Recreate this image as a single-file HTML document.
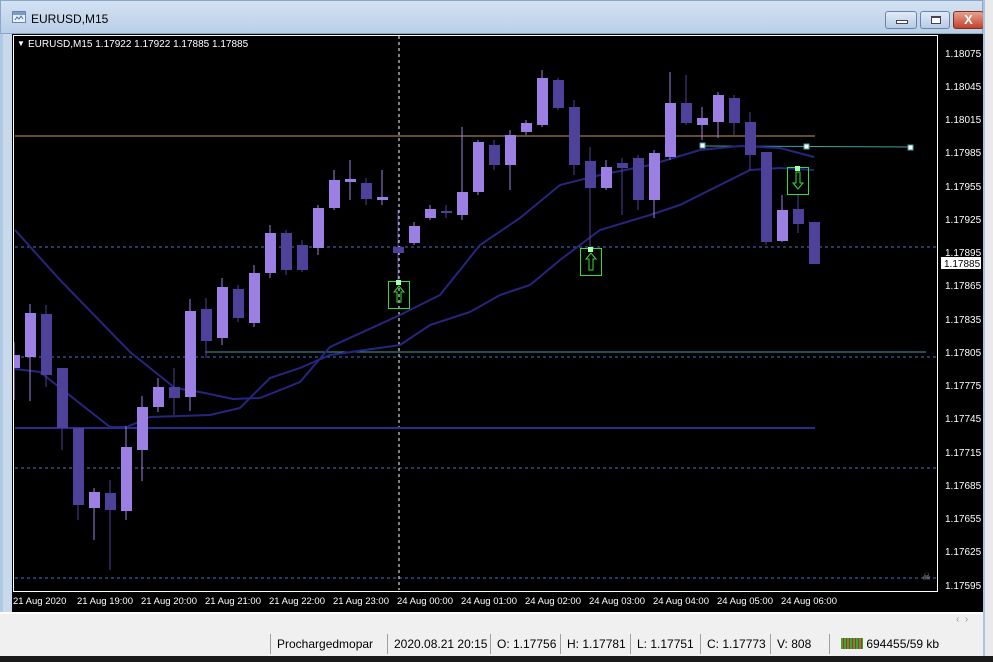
<!DOCTYPE html>
<html><head><meta charset="utf-8"><style>
*{margin:0;padding:0;box-sizing:border-box}
body{width:993px;height:662px;overflow:hidden;background:#f0f0f0;font-family:"Liberation Sans",sans-serif;position:relative}
.title{position:absolute;left:0;top:0;width:983px;height:34px;background:linear-gradient(#d4e2f2,#b9cfe8);border:1px solid #8aa6c8}
.title span{position:absolute;left:30px;top:11px;font-size:12px;color:#000}
.btn{position:absolute;top:10px;height:18px;border:1px solid #6d84a8;border-radius:3px;background:linear-gradient(#e0ebf7,#b6cbe5)}
.chart{position:absolute;left:12px;top:34px;width:971px;height:578px;background:#000}
.lstrip{position:absolute;left:0;top:34px;width:12px;height:578px;background:#c9d9ec;border-left:3px solid #b0c8e4}
.right{position:absolute;left:983px;top:0;width:10px;height:662px;background:#eaeaea;border-left:2px solid #a9c3e1}
.status{position:absolute;left:0;top:632px;width:983px;height:24px;background:#f0f0f0;font-size:12px;color:#000}
.status div{position:absolute;border-left:1px solid #a0a0a0;padding-left:6px;height:20px;top:2px;line-height:20px}
.bottom{position:absolute;left:0;top:656px;width:993px;height:6px;background:#1a1a1a}
</style></head><body>
<div class="title"><svg style="position:absolute;left:11px;top:10px" width="14" height="12"><rect x="0.5" y="0.5" width="13" height="11" fill="#e8f0fa" stroke="#6a86b0"/><rect x="1" y="1" width="12" height="3" fill="#7c9cc8"/><path d="M3 9 L5 6 L7 8 L9 5 L11 8" stroke="#4070b0" fill="none"/></svg><span>EURUSD,M15</span>
<div class="btn" style="left:884px;width:32px"><div style="position:absolute;left:10px;top:8px;width:12px;height:4px;border:1px solid #445;background:#fff"></div></div>
<div class="btn" style="left:919px;width:30px"><div style="position:absolute;left:10px;top:4px;width:10px;height:8px;border:1px solid #445;border-top-width:2px;background:#fff"></div></div>
<div class="btn" style="left:952px;width:31px;background:linear-gradient(#e8a090,#c0442c);border-color:#803020;color:#fff;font-weight:bold;font-size:13px;text-align:center;line-height:16px">X</div>
</div>
<div class="right"></div>
<div class="lstrip"></div>
<div class="chart"></div>
<svg style="position:absolute;left:0;top:0" width="983" height="612" font-family="Liberation Sans, sans-serif" font-size="10">
<defs><clipPath id="cp"><rect x="14" y="35" width="924" height="556"/></clipPath></defs>
<rect x="13.5" y="35.5" width="924" height="556" fill="none" stroke="#fff"/>
<text x="17" y="46" fill="#fff" font-size="8">▼</text>
<text x="28" y="47" fill="#fff" font-size="10">EURUSD,M15  1.17922 1.17922 1.17885 1.17885</text>
<g stroke="#4a6fc0" stroke-dasharray="3,3">
<line x1="15" y1="247" x2="937" y2="247"/><line x1="15" y1="357" x2="937" y2="357"/><line x1="15" y1="468" x2="937" y2="468"/><line x1="15" y1="578" x2="937" y2="578"/></g>
<line x1="399" y1="36" x2="399" y2="590" stroke="#fff" stroke-dasharray="3,3"/>
<line x1="15" y1="136" x2="815" y2="136" stroke="#c89a58"/>
<line x1="15" y1="428" x2="815" y2="428" stroke="#2a2a90" stroke-width="2"/>
<line x1="205" y1="352" x2="926" y2="352" stroke="#3fa0a0"/>
<line x1="703" y1="146" x2="910" y2="147" stroke="#3fa0a0"/>
<g fill="#fff" stroke="#3fa0a0"><rect x="700" y="143" width="5" height="5"/><rect x="804" y="144" width="5" height="5"/><rect x="908" y="145" width="5" height="5"/></g>
<g fill="none" stroke="#262680" stroke-width="2">
<polyline points="15,230 60,280 130,352 175,388 200,392 233,399 260,398 300,382 330,347 400,315 440,295 480,245 520,218 560,185 600,175 650,165 700,150 740,146 780,148 814,157"/>
<polyline points="15,369 40,372 110,427 127,427 150,417 210,415 240,408 270,378 300,368 330,355 400,345 430,325 470,312 500,295 530,285 560,260 600,230 650,215 680,205 720,185 750,170 780,168 814,170"/>
</g>
<g id="c" clip-path="url(#cp)"></g>
<g fill="none" stroke="#30e030"><rect x="388.5" y="281.5" width="21" height="27"/><rect x="580.5" y="248.5" width="21" height="27"/><rect x="787.5" y="167.5" width="21" height="27"/>
<path d="M399 286 L394 292 L397 292 L397 302 L401 302 L401 292 L404 292 Z"/>
<path d="M591 253 L586 259 L589 259 L589 270 L593 270 L593 259 L596 259 Z"/>
<path d="M798 189 L793 183 L796 183 L796 172 L800 172 L800 183 L803 183 Z"/></g>
<g fill="#b0ffb0"><rect x="396" y="280" width="5" height="5"/><rect x="588" y="247" width="5" height="5"/><rect x="795" y="166" width="5" height="5"/></g>
<g fill="#fff">
<text x="945" y="57">1.18075</text><text x="945" y="90">1.18045</text><text x="945" y="123">1.18015</text><text x="945" y="156">1.17985</text><text x="945" y="190">1.17955</text><text x="945" y="223">1.17925</text><text x="945" y="256">1.17895</text><text x="945" y="289">1.17865</text><text x="945" y="323">1.17835</text><text x="945" y="356">1.17805</text><text x="945" y="389">1.17775</text><text x="945" y="422">1.17745</text><text x="945" y="456">1.17715</text><text x="945" y="489">1.17685</text><text x="945" y="522">1.17655</text><text x="945" y="555">1.17625</text><text x="945" y="589">1.17595</text>
</g>
<rect x="941" y="257" width="40" height="12" fill="#fff"/><text x="944" y="267" fill="#000">1.17885</text>
<g fill="#fff" font-size="9.5">
<text x="13" y="604">21 Aug 2020</text><text x="77" y="604">21 Aug 19:00</text><text x="141" y="604">21 Aug 20:00</text><text x="205" y="604">21 Aug 21:00</text><text x="269" y="604">21 Aug 22:00</text><text x="333" y="604">21 Aug 23:00</text><text x="397" y="604">24 Aug 00:00</text><text x="461" y="604">24 Aug 01:00</text><text x="525" y="604">24 Aug 02:00</text><text x="589" y="604">24 Aug 03:00</text><text x="653" y="604">24 Aug 04:00</text><text x="717" y="604">24 Aug 05:00</text><text x="781" y="604">24 Aug 06:00</text>
</g>
<text x="922" y="580" fill="#999" font-size="10">☠</text>
</svg>
<div style="position:absolute;left:0;top:612px;width:983px;height:2px;background:#fff"></div>
<div style="position:absolute;left:956px;top:614px;font-size:10px;color:#999">‹ &nbsp;›</div>
<div class="status">
<div style="left:270px">Prochargedmopar</div>
<div style="left:387px">2020.08.21 20:15</div>
<div style="left:490px">O: 1.17756</div>
<div style="left:560px">H: 1.17781</div>
<div style="left:630px">L: 1.17751</div>
<div style="left:700px">C: 1.17773</div>
<div style="left:770px">V: 808</div>
<div style="left:829px;padding-left:11px"><span style="display:inline-block;width:22px;height:11px;background:repeating-linear-gradient(90deg,#3a3 0 2px,#c22 2px 3px);vertical-align:-1px"></span> 694455/59 kb</div>
</div>
<div class="bottom"></div>
<script>
var d=[[14,355,368,342,400,1],[30,313,357,304,401,1],[46,314,375,305,387,0],[62,368,428,368,450,0],[78,428,505,428,520,0],[94,492,508,488,540,1],[110,493,510,480,570,0],[126,447,511,426,520,1],[142,407,450,396,481,1],[158,387,407,378,412,1],[174,387,398,368,415,0],[190,311,397,299,411,1],[206,309,341,298,358,0],[222,287,338,278,345,1],[238,289,318,285,322,0],[254,273,323,265,327,1],[270,233,273,225,278,1],[286,233,270,230,275,0],[302,245,270,240,272,0],[318,208,248,205,255,1],[334,180,208,170,210,1],[350,179,182,160,200,1],[366,183,199,178,205,0],[382,197,200,170,205,1],[398,247,253,210,280,0],[414,226,243,222,245,1],[430,209,218,205,220,1],[446,211,213,205,218,0],[462,192,215,127,220,1],[478,142,192,140,195,1],[494,145,165,140,170,0],[510,135,165,130,190,1],[526,123,132,120,135,1],[542,78,125,70,127,1],[558,80,108,78,110,0],[574,107,165,100,175,0],[590,161,188,147,250,0],[606,167,188,160,190,1],[622,163,168,158,215,0],[638,158,200,155,210,0],[654,153,200,150,218,1],[670,103,157,72,160,1],[686,103,123,75,125,0],[702,118,125,107,140,1],[718,95,122,92,138,1],[734,98,123,95,135,0],[750,122,155,112,170,0],[766,152,242,152,245,0],[782,210,241,195,242,1],[798,209,224,195,233,0],[814,222,264,222,264,0]];
var s='';d.forEach(function(c){var col=c[5]?'#9b7fe2':'#4d4199';s+='<line x1="'+c[0]+'" y1="'+c[3]+'" x2="'+c[0]+'" y2="'+c[4]+'" stroke="'+col+'"/><rect x="'+(c[0]-5)+'" y="'+c[1]+'" width="11" height="'+Math.max(2,c[2]-c[1])+'" fill="'+col+'"/>';});
document.getElementById('c').innerHTML=s;
</script>
</body></html>
